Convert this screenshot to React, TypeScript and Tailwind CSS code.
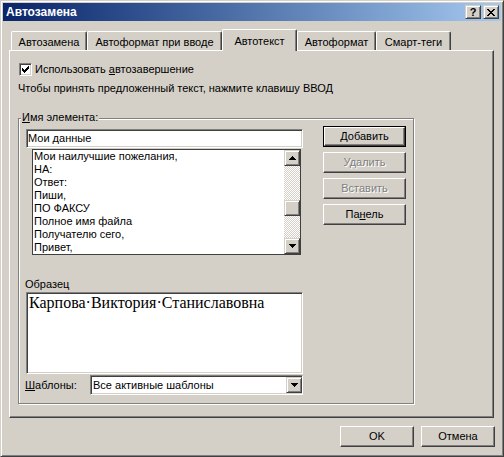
import React from "react";

const raised =
  "border border-t-white border-l-white border-r-[#404040] border-b-[#404040] shadow-[inset_-1px_-1px_0_#808080]";
const raisedSb =
  "border border-t-[#d4d0c8] border-l-[#d4d0c8] border-r-[#404040] border-b-[#404040] shadow-[inset_1px_1px_0_#fff,inset_-1px_-1px_0_#808080]";
const sunken =
  "border border-t-[#808080] border-l-[#808080] border-r-white border-b-white shadow-[inset_1px_1px_0_#404040,inset_-1px_-1px_0_#d4d0c8]";

function Arrow({ down }: { down?: boolean }) {
  return (
    <svg width="7" height="4" viewBox="0 0 7 4" shapeRendering="crispEdges">
      <path
        d={
          down
            ? "M0 0h7v1H0z M1 1h5v1H1z M2 2h3v1H2z M3 3h1v1H3z"
            : "M3 0h1v1H3z M2 1h3v1H2z M1 2h5v1H1z M0 3h7v1H0z"
        }
        fill="#000"
      />
    </svg>
  );
}

function U({ children }: { children: React.ReactNode }) {
  return <span className="underline decoration-1 underline-offset-[1px]">{children}</span>;
}

function Tab({ label, active, w }: { label: string; active?: boolean; w: string }) {
  return (
    <div
      className={
        active
          ? `${w} relative z-10 -mb-px h-[22px] bg-[#d4d0c8] border-t border-l border-r border-t-white border-l-white border-r-[#404040] shadow-[inset_-1px_0_0_#808080] rounded-tl-[2px] rounded-tr-[2px] flex justify-center pt-[5px]`
          : `${w} h-[19px] bg-[#d4d0c8] border-t border-l border-r border-t-white border-l-white border-r-[#404040] shadow-[inset_-1px_0_0_#808080] rounded-tl-[2px] rounded-tr-[2px] flex justify-center pt-[4px]`
      }
    >
      <span className="whitespace-nowrap">{label}</span>
    </div>
  );
}

function PushButton({
  children,
  def,
  disabled,
  w,
}: {
  children: React.ReactNode;
  def?: boolean;
  disabled?: boolean;
  w: string;
}) {
  return (
    <div
      className={
        def
          ? `${w} h-[21px] border border-black bg-[#d4d0c8] flex`
          : `${w} h-[21px] bg-[#d4d0c8] flex`
      }
    >
      <div
        className={`flex-1 flex items-center justify-center ${raised} ${
          disabled ? "text-[#808080] [text-shadow:1px_1px_0_#fff]" : "text-black"
        }`}
      >
        {children}
      </div>
    </div>
  );
}

const items = [
  "Мои наилучшие пожелания,",
  "НА:",
  "Ответ:",
  "Пиши,",
  "ПО ФАКСУ",
  "Полное имя файла",
  "Получателю сего,",
  "Привет,",
];

export default function App() {
  return (
    <div className="w-[504px] h-[457px] bg-[#d4d0c8] border border-t-[#d4d0c8] border-l-[#d4d0c8] border-r-[#404040] border-b-[#404040] shadow-[inset_1px_1px_0_#fff,inset_-1px_-1px_0_#808080] p-[2px] flex flex-col font-['Liberation_Sans',Arial,sans-serif] text-[11px] leading-[13px] text-black select-none overflow-hidden">
      {/* Title bar */}
      <div className="h-[18px] shrink-0 flex items-center bg-linear-to-r from-[#0a246a] to-[#a6caf0] pl-[3px] pr-[2px]">
        <span className="flex-1 text-white font-bold text-[12px] leading-[13px]">Автозамена</span>
        <div className={`w-[16px] h-[14px] bg-[#d4d0c8] ${raisedSb} flex items-center justify-center font-bold text-[11px] leading-none`}>
          ?
        </div>
        <div className={`ml-[2px] w-[16px] h-[14px] bg-[#d4d0c8] ${raisedSb} flex items-center justify-center`}>
          <svg width="8" height="7" viewBox="0 0 8 7" shapeRendering="crispEdges">
            <path
              d="M0 0h2v1H0z M6 0h2v1H6z M1 1h2v1H1z M5 1h2v1H5z M2 2h4v1H2z M3 3h2v1H3z M2 4h4v1H2z M1 5h2v1H1z M5 5h2v1H5z M0 6h2v1H0z M6 6h2v1H6z"
              fill="#000"
            />
          </svg>
        </div>
      </div>

      {/* Tabs */}
      <div className="mt-[8px] pl-[8px] h-[21px] flex items-end shrink-0">
        <Tab w="w-[76px]" label="Автозамена" />
        <Tab w="w-[135px]" label="Автоформат при вводе" />
        <Tab w="w-[75px]" label="Автотекст" active />
        <Tab w="w-[79px]" label="Автоформат" />
        <Tab w="w-[75px]" label="Смарт-теги" />
      </div>

      {/* Panel */}
      <div className="ml-[6px] w-[485px] h-[368px] shrink-0 border border-t-white border-l-white border-r-[#404040] border-b-[#404040] shadow-[inset_-1px_-1px_0_#808080] pt-[12px] pl-[8px] flex flex-col">
        <div className="flex items-center h-[13px]">
          <div className={`ml-px w-[13px] h-[13px] bg-white ${sunken} flex items-center justify-center`}>
            <svg width="7" height="7" viewBox="0 0 7 7" shapeRendering="crispEdges">
              <path
                d="M6 0h1v1H6z M5 1h2v1H5z M0 2h1v1H0z M4 2h3v1H4z M0 3h2v1H0z M3 3h3v1H3z M0 4h5v1H0z M1 5h3v1H1z M2 6h1v1H2z"
                fill="#000"
              />
            </svg>
          </div>
          <span className="ml-[3px]">
            Использовать <U>а</U>втозавершение
          </span>
        </div>
        <div className="mt-[6px] whitespace-nowrap">
          Чтобы принять предложенный текст, нажмите клавишу ВВОД
        </div>

        {/* Group box */}
        <div className="relative mt-[23px] w-[396px] border border-[#808080] shadow-[inset_1px_1px_0_#fff,1px_1px_0_#fff] pt-[7px] pl-[7px] pr-[7px] pb-[8px] flex gap-[20px]">
          <div className="absolute left-[2px] -top-[8px] px-[1px] bg-[#d4d0c8]">
            <U>И</U>мя элемента:
          </div>

          {/* Left column */}
          <div className="w-[277px] mt-[3px] flex flex-col">
            <div className={`h-[19px] bg-white ${sunken} flex items-center pl-[1px]`}>Мои данные</div>
            <div className="mt-px ml-[6px] w-[269px] h-[106px] bg-white border border-[#404040] flex">
              <div className="flex-1 pl-[1px] overflow-hidden">
                {items.map((t) => (
                  <div key={t} className="h-[13px] whitespace-nowrap">
                    {t}
                  </div>
                ))}
              </div>
              <div className="w-[16px] flex flex-col">
                <div className={`h-[16px] bg-[#d4d0c8] ${raisedSb} flex items-center justify-center`}>
                  <Arrow />
                </div>
                <div className="flex-1 bg-[repeating-conic-gradient(#d4d0c8_0_25%,#ffffff_0_50%)] bg-[length:2px_2px]">
                  <div className={`mt-[34px] h-[16px] bg-[#d4d0c8] ${raisedSb}`} />
                </div>
                <div className={`h-[16px] bg-[#d4d0c8] ${raisedSb} flex items-center justify-center`}>
                  <Arrow down />
                </div>
              </div>
            </div>

            <div className="mt-[23px] -ml-px">Образец</div>
            <div className={`mt-px h-[82px] bg-white ${sunken} pl-[2px] pt-[1px] font-['Liberation_Serif',serif] text-[16px] leading-[18px] whitespace-nowrap`}>
              Карпова·Виктория·Станиславовна
            </div>
            <div className="mt-px h-[20px] flex items-center">
              <span className="-ml-px">
                <U>Ш</U>аблоны:
              </span>
              <div className={`ml-auto w-[213px] h-[20px] bg-white ${sunken} flex items-center`}>
                <span className="flex-1 pl-[2px]">Все активные шаблоны</span>
                <div className={`w-[16px] h-[16px] bg-[#d4d0c8] ${raisedSb} flex items-center justify-center`}>
                  <Arrow down />
                </div>
              </div>
            </div>
          </div>

          {/* Right column */}
          <div className="w-[83px] flex flex-col gap-[5px]">
            <PushButton w="w-[83px]" def>
              <span>
                <U>Д</U>обавить
              </span>
            </PushButton>
            <PushButton w="w-[83px]" disabled>
              Удалить
            </PushButton>
            <PushButton w="w-[83px]" disabled>
              Вставить
            </PushButton>
            <PushButton w="w-[83px]">
              <span>
                Па<U>н</U>ель
              </span>
            </PushButton>
          </div>
        </div>
      </div>

      {/* Bottom buttons */}
      <div className="mt-[8px] flex justify-end gap-[7px] pr-[6px]">
        <PushButton w="w-[74px]">OK</PushButton>
        <PushButton w="w-[74px]">Отмена</PushButton>
      </div>
    </div>
  );
}
